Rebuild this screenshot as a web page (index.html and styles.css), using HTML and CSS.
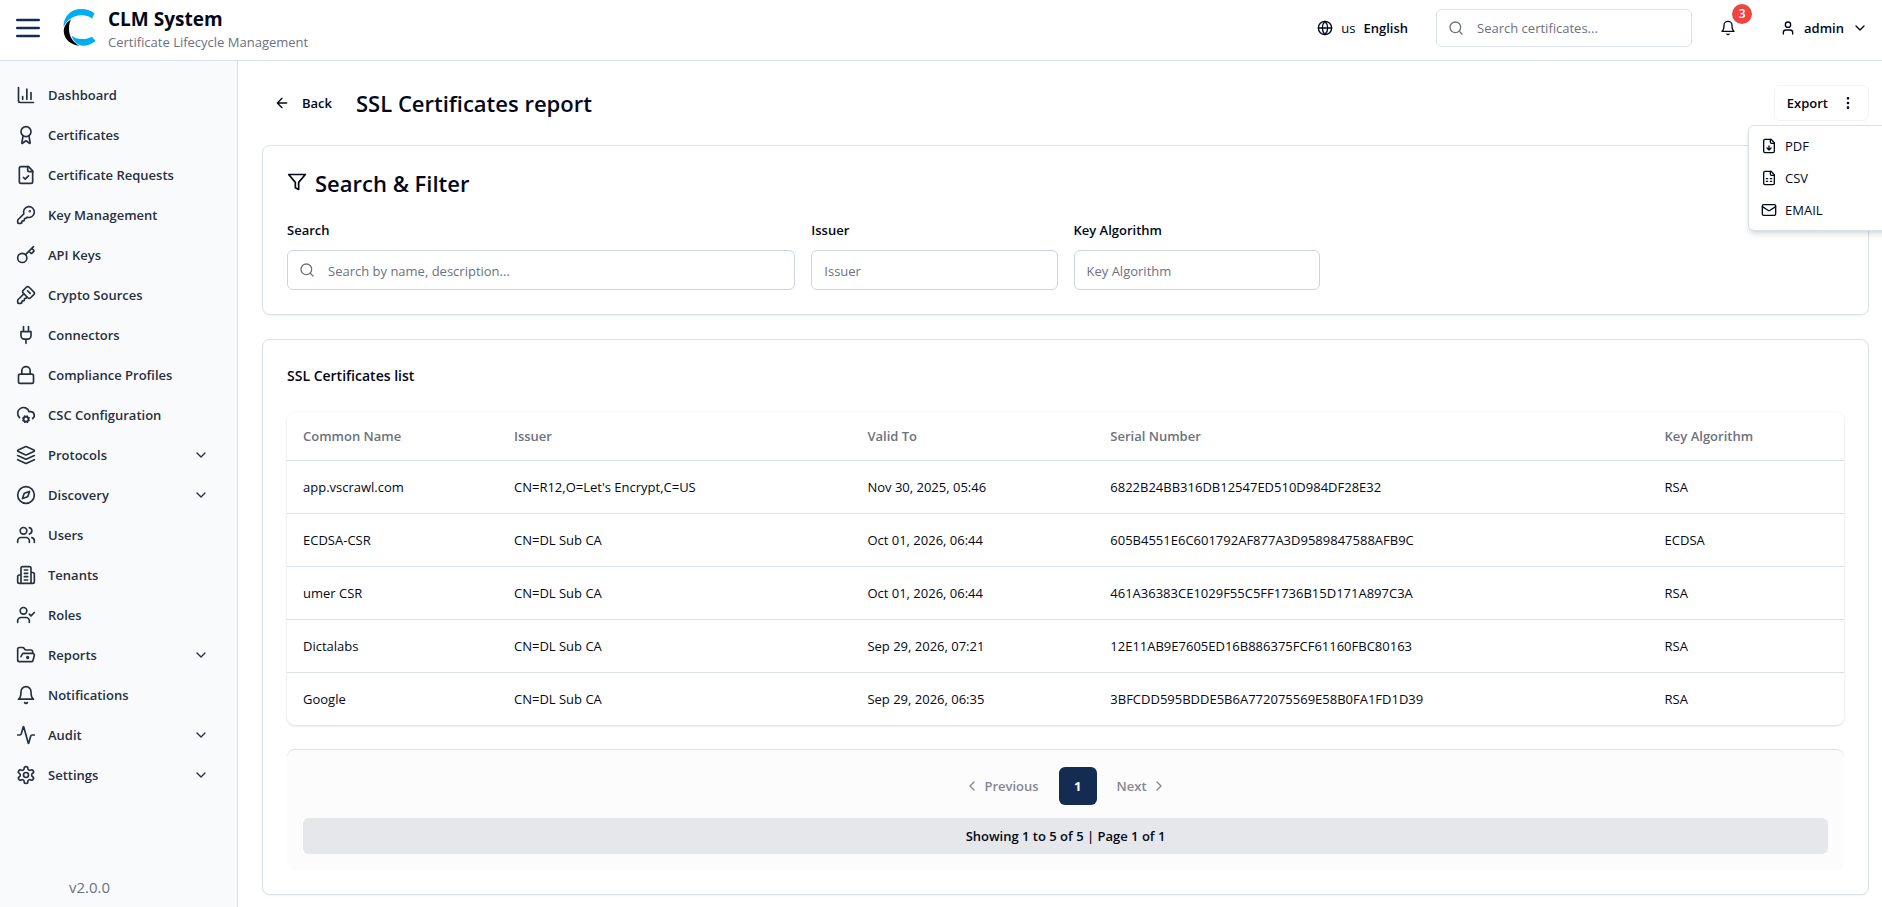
FILE: index.html
```html
<!DOCTYPE html>
<html lang="en">
<head>
<meta charset="utf-8">
<meta name="viewport" content="width=device-width, initial-scale=1">
<title>SSL Certificates report - CLM System</title>
<link rel="stylesheet" href="styles.css">
</head>
<body>
<svg class="sprite" aria-hidden="true">
  <symbol id="i-chart" viewBox="0 0 24 24"><path d="M3 3v16a2 2 0 0 0 2 2h16M18 17V9M13 17V5M8 17v-3"/></symbol>
  <symbol id="i-award" viewBox="0 0 24 24"><path d="m15.477 12.89 1.515 8.526a.5.5 0 0 1-.81.47l-3.58-2.687a1 1 0 0 0-1.197 0l-3.586 2.686a.5.5 0 0 1-.81-.469l1.514-8.526"/><circle cx="12" cy="8" r="6"/></symbol>
  <symbol id="i-file-check" viewBox="0 0 24 24"><path d="M15 2H6a2 2 0 0 0-2 2v16a2 2 0 0 0 2 2h12a2 2 0 0 0 2-2V7Z"/><path d="M14 2v4a2 2 0 0 0 2 2h4M9 15l2 2 4-4"/></symbol>
  <symbol id="i-key-round" viewBox="0 0 24 24"><path d="M2.586 17.414A2 2 0 0 0 2 18.828V21a1 1 0 0 0 1 1h3a1 1 0 0 0 1-1v-1a1 1 0 0 1 1-1h1a1 1 0 0 0 1-1v-1a1 1 0 0 1 1-1h.172a2 2 0 0 0 1.414-.586l.814-.814a6.5 6.5 0 1 0-4-4z"/><circle cx="16.5" cy="7.5" r=".5" fill="currentColor"/></symbol>
  <symbol id="i-key" viewBox="0 0 24 24"><path d="m15.5 7.5 2.3 2.3a1 1 0 0 0 1.4 0l2.1-2.1a1 1 0 0 0 0-1.4L19 4M21 2l-9.6 9.6"/><circle cx="7.5" cy="15.5" r="5.5"/></symbol>
  <symbol id="i-key-square" viewBox="0 0 24 24"><path d="M12.4 2.7a2.5 2.5 0 0 1 3.4 0l5.5 5.5a2.5 2.5 0 0 1 0 3.4l-3.7 3.7a2.5 2.5 0 0 1-3.4 0L8.7 9.8a2.5 2.5 0 0 1 0-3.4zM14 7l3 3"/><path d="m9.4 10.6-6.814 6.814A2 2 0 0 0 2 18.828V21a1 1 0 0 0 1 1h3a1 1 0 0 0 1-1v-1a1 1 0 0 1 1-1h1a1 1 0 0 0 1-1v-1a1 1 0 0 1 1-1h.172a2 2 0 0 0 1.414-.586l.814-.814"/></symbol>
  <symbol id="i-plug" viewBox="0 0 24 24"><path d="M12 22v-5M9 8V2M15 8V2M18 8v5a4 4 0 0 1-4 4h-4a4 4 0 0 1-4-4V8Z"/></symbol>
  <symbol id="i-lock" viewBox="0 0 24 24"><rect width="18" height="11" x="3" y="11" rx="2"/><path d="M7 11V7a5 5 0 0 1 10 0v4"/></symbol>
  <symbol id="i-cloud-cog" viewBox="0 0 24 24"><circle cx="12" cy="17" r="3"/><path d="M4.2 15.1A7 7 0 1 1 15.71 8h1.79a4.5 4.5 0 0 1 2.5 8.2M15.7 18.4l-.9-.3M9.2 15.9l-.9-.3M10.6 20.7l.3-.9M13.1 14.2l.3-.9M13.6 20.7l-.4-1M10.8 14.3l-.4-1M8.3 18.6l1-.4M14.7 15.8l1-.4"/></symbol>
  <symbol id="i-layers" viewBox="0 0 24 24"><path d="M12.83 2.18a2 2 0 0 0-1.66 0L2.6 6.08a1 1 0 0 0 0 1.83l8.58 3.91a2 2 0 0 0 1.66 0l8.58-3.9a1 1 0 0 0 0-1.83ZM22 17.65l-9.17 4.16a2 2 0 0 1-1.66 0L2 17.65M22 12.65l-9.17 4.16a2 2 0 0 1-1.66 0L2 12.65"/></symbol>
  <symbol id="i-compass" viewBox="0 0 24 24"><circle cx="12" cy="12" r="10"/><path d="m16.24 7.76-1.804 5.411a2 2 0 0 1-1.265 1.265L7.76 16.24l1.804-5.411a2 2 0 0 1 1.265-1.265z"/></symbol>
  <symbol id="i-users" viewBox="0 0 24 24"><path d="M16 21v-2a4 4 0 0 0-4-4H6a4 4 0 0 0-4 4v2M22 21v-2a4 4 0 0 0-3-3.87M16 3.13a4 4 0 0 1 0 7.75"/><circle cx="9" cy="7" r="4"/></symbol>
  <symbol id="i-building" viewBox="0 0 24 24"><path d="M6 22V4a2 2 0 0 1 2-2h8a2 2 0 0 1 2 2v18ZM6 12H4a2 2 0 0 0-2 2v6a2 2 0 0 0 2 2h2M18 9h2a2 2 0 0 1 2 2v9a2 2 0 0 1-2 2h-2M10 6h4M10 10h4M10 14h4M10 18h4"/></symbol>
  <symbol id="i-user-check" viewBox="0 0 24 24"><path d="m16 11 2 2 4-4M16 21v-2a4 4 0 0 0-4-4H6a4 4 0 0 0-4 4v2"/><circle cx="9" cy="7" r="4"/></symbol>
  <symbol id="i-folder" viewBox="0 0 24 24"><path d="m6 14 1.45-2.9A2 2 0 0 1 9.24 10H20a2 2 0 0 1 1.94 2.5l-1.55 6a2 2 0 0 1-1.94 1.5H4a2 2 0 0 1-2-2V5c0-1.1.9-2 2-2h3.93a2 2 0 0 1 1.66.9l.82 1.2a2 2 0 0 0 1.66.9H18a2 2 0 0 1 2 2v2"/><circle cx="14" cy="15" r="1"/></symbol>
  <symbol id="i-bell" viewBox="0 0 24 24"><path d="M6 8a6 6 0 0 1 12 0c0 7 3 9 3 9H3s3-2 3-9M10.3 21a1.94 1.94 0 0 0 3.4 0"/></symbol>
  <symbol id="i-activity" viewBox="0 0 24 24"><path d="M22 12h-2.48a2 2 0 0 0-1.93 1.46l-2.35 8.36a.25.25 0 0 1-.48 0L9.24 2.18a.25.25 0 0 0-.48 0l-2.35 8.36A2 2 0 0 1 4.49 12H2"/></symbol>
  <symbol id="i-settings" viewBox="0 0 24 24"><path d="M12.22 2h-.44a2 2 0 0 0-2 2v.18a2 2 0 0 1-1 1.73l-.43.25a2 2 0 0 1-2 0l-.15-.08a2 2 0 0 0-2.73.73l-.22.38a2 2 0 0 0 .73 2.73l.15.1a2 2 0 0 1 1 1.72v.51a2 2 0 0 1-1 1.74l-.15.09a2 2 0 0 0-.73 2.73l.22.38a2 2 0 0 0 2.73.73l.15-.08a2 2 0 0 1 2 0l.43.25a2 2 0 0 1 1 1.73V20a2 2 0 0 0 2 2h.44a2 2 0 0 0 2-2v-.18a2 2 0 0 1 1-1.73l.43-.25a2 2 0 0 1 2 0l.15.08a2 2 0 0 0 2.73-.73l.22-.39a2 2 0 0 0-.73-2.73l-.15-.08a2 2 0 0 1-1-1.74v-.5a2 2 0 0 1 1-1.74l.15-.09a2 2 0 0 0 .73-2.73l-.22-.38a2 2 0 0 0-2.73-.73l-.15.08a2 2 0 0 1-2 0l-.43-.25a2 2 0 0 1-1-1.73V4a2 2 0 0 0-2-2z"/><circle cx="12" cy="12" r="3"/></symbol>
  <symbol id="i-down" viewBox="0 0 24 24"><path d="m6 9 6 6 6-6"/></symbol>
  <symbol id="i-left" viewBox="0 0 24 24"><path d="m15 18-6-6 6-6"/></symbol>
  <symbol id="i-right" viewBox="0 0 24 24"><path d="m9 18 6-6-6-6"/></symbol>
  <symbol id="i-arrow-left" viewBox="0 0 24 24"><path d="m12 19-7-7 7-7M19 12H5"/></symbol>
  <symbol id="i-menu" viewBox="0 0 24 24"><path stroke-width="2.4" d="M1.200 4h21.600M1.200 12h21.600M1.200 20h21.600"/></symbol>
  <symbol id="i-globe" viewBox="0 0 24 24"><circle cx="12" cy="12" r="10"/><path d="M12 2a14.5 14.5 0 0 0 0 20 14.5 14.5 0 0 0 0-20M2 12h20"/></symbol>
  <symbol id="i-search" viewBox="0 0 24 24"><circle cx="11" cy="11" r="8"/><path d="m21 21-4.3-4.3"/></symbol>
  <symbol id="i-user" viewBox="0 0 24 24"><path d="M19 21v-2a4 4 0 0 0-4-4H9a4 4 0 0 0-4 4v2"/><circle cx="12" cy="7" r="4"/></symbol>
  <symbol id="i-dots" viewBox="0 0 24 24"><circle cx="12" cy="12" r="1"/><circle cx="12" cy="5" r="1"/><circle cx="12" cy="19" r="1"/></symbol>
  <symbol id="i-filter" viewBox="0 0 24 24"><path d="M22 3H2l8 9.46V19l4 2v-8.54L22 3z"/></symbol>
  <symbol id="i-file-down" viewBox="0 0 24 24"><path d="M15 2H6a2 2 0 0 0-2 2v16a2 2 0 0 0 2 2h12a2 2 0 0 0 2-2V7Z"/><path d="M14 2v4a2 2 0 0 0 2 2h4M12 18v-6M9 15l3 3 3-3"/></symbol>
  <symbol id="i-file-sheet" viewBox="0 0 24 24"><path d="M15 2H6a2 2 0 0 0-2 2v16a2 2 0 0 0 2 2h12a2 2 0 0 0 2-2V7Z"/><path d="M14 2v4a2 2 0 0 0 2 2h4M8 13h2M14 13h2M8 17h2M14 17h2"/></symbol>
  <symbol id="i-mail" viewBox="0 0 24 24"><rect width="20" height="16" x="2" y="4" rx="2"/><path d="m22 7-8.97 5.7a1.94 1.94 0 0 1-2.06 0L2 7"/></symbol>
</svg>

<header class="topbar">
  <button class="menu-toggle" type="button" aria-label="Toggle menu"><svg class="icon icon-24"><use href="#i-menu"/></svg></button>
  <svg class="logo" viewBox="0 0 33 38" aria-hidden="true">
    <path fill="#00aeef" d="M.5 19C.5 8 8 1 18 1c6 0 10.500 1.500 13.500 4.500L29 10.500C26 8 22 7 18 7.200 10 7.500 4 12 .5 19z"/>
    <path fill="#000" d="M8 11.500C3 14.500.5 19 .8 24c.7 7.500 7 13 15.700 13.700C9.500 34 6 28 6 21c0-4 .5-6.500 2-9.500z"/>
    <path fill="#00aeef" d="M8.500 27.500c4 4 14 5 20.500 1.300l3.500 4.200C28.500 36.500 24 38 19 37.700 14 36.500 10 33 8.500 27.500z"/>
  </svg>
  <div class="brand">
    <strong class="brand-name">CLM System</strong>
    <span class="brand-sub">Certificate Lifecycle Management</span>
  </div>
  <div class="topbar-tools">
    <button class="language" type="button"><svg class="icon"><use href="#i-globe"/></svg><span class="region">us</span><span>English</span></button>
    <label class="searchbox topbar-search"><svg class="icon"><use href="#i-search"/></svg><input type="text" aria-label="Search certificates" placeholder="Search certificates..."></label>
    <button class="bell" type="button" aria-label="Notifications"><svg class="icon"><use href="#i-bell"/></svg><span class="badge">3</span></button>
    <button class="account" type="button"><svg class="icon"><use href="#i-user"/></svg><span>admin</span><svg class="icon"><use href="#i-down"/></svg></button>
  </div>
</header>

<div class="shell">
  <aside class="sidebar">
    <nav class="nav">
      <a class="nav-item" href="#"><svg class="icon icon-20"><use href="#i-chart"/></svg><span>Dashboard</span></a>
      <a class="nav-item" href="#"><svg class="icon icon-20"><use href="#i-award"/></svg><span>Certificates</span></a>
      <a class="nav-item" href="#"><svg class="icon icon-20"><use href="#i-file-check"/></svg><span>Certificate Requests</span></a>
      <a class="nav-item" href="#"><svg class="icon icon-20"><use href="#i-key-round"/></svg><span>Key Management</span></a>
      <a class="nav-item" href="#"><svg class="icon icon-20"><use href="#i-key"/></svg><span>API Keys</span></a>
      <a class="nav-item" href="#"><svg class="icon icon-20"><use href="#i-key-square"/></svg><span>Crypto Sources</span></a>
      <a class="nav-item" href="#"><svg class="icon icon-20"><use href="#i-plug"/></svg><span>Connectors</span></a>
      <a class="nav-item" href="#"><svg class="icon icon-20"><use href="#i-lock"/></svg><span>Compliance Profiles</span></a>
      <a class="nav-item" href="#"><svg class="icon icon-20"><use href="#i-cloud-cog"/></svg><span>CSC Configuration</span></a>
      <button class="nav-item" type="button"><svg class="icon icon-20"><use href="#i-layers"/></svg><span>Protocols</span><svg class="icon chevron"><use href="#i-down"/></svg></button>
      <button class="nav-item" type="button"><svg class="icon icon-20"><use href="#i-compass"/></svg><span>Discovery</span><svg class="icon chevron"><use href="#i-down"/></svg></button>
      <a class="nav-item" href="#"><svg class="icon icon-20"><use href="#i-users"/></svg><span>Users</span></a>
      <a class="nav-item" href="#"><svg class="icon icon-20"><use href="#i-building"/></svg><span>Tenants</span></a>
      <a class="nav-item" href="#"><svg class="icon icon-20"><use href="#i-user-check"/></svg><span>Roles</span></a>
      <button class="nav-item" type="button"><svg class="icon icon-20"><use href="#i-folder"/></svg><span>Reports</span><svg class="icon chevron"><use href="#i-down"/></svg></button>
      <a class="nav-item" href="#"><svg class="icon icon-20"><use href="#i-bell"/></svg><span>Notifications</span></a>
      <button class="nav-item" type="button"><svg class="icon icon-20"><use href="#i-activity"/></svg><span>Audit</span><svg class="icon chevron"><use href="#i-down"/></svg></button>
      <button class="nav-item" type="button"><svg class="icon icon-20"><use href="#i-settings"/></svg><span>Settings</span><svg class="icon chevron"><use href="#i-down"/></svg></button>
    </nav>
    <div class="version">v2.0.0</div>
  </aside>

  <main class="main">
    <div class="page-head">
      <button class="back" type="button"><svg class="icon"><use href="#i-arrow-left"/></svg><span>Back</span></button>
      <h1 class="title">SSL Certificates report</h1>
      <div class="export">
        <button class="export-button" type="button" aria-expanded="true"><span>Export</span><svg class="icon"><use href="#i-dots"/></svg></button>
        <div class="export-menu">
          <button class="export-item" type="button"><svg class="icon"><use href="#i-file-down"/></svg><span>PDF</span></button>
          <button class="export-item" type="button"><svg class="icon"><use href="#i-file-sheet"/></svg><span>CSV</span></button>
          <button class="export-item" type="button"><svg class="icon"><use href="#i-mail"/></svg><span>EMAIL</span></button>
        </div>
      </div>
    </div>

    <section class="card">
      <h2 class="title filter-title"><svg class="icon icon-20"><use href="#i-filter"/></svg><span>Search &amp; Filter</span></h2>
      <form class="filters">
        <div class="field field-wide">
          <label for="f-search">Search</label>
          <div class="searchbox"><svg class="icon"><use href="#i-search"/></svg><input id="f-search" type="text" placeholder="Search by name, description..."></div>
        </div>
        <div class="field">
          <label for="f-issuer">Issuer</label>
          <input id="f-issuer" type="text" placeholder="Issuer">
        </div>
        <div class="field">
          <label for="f-algo">Key Algorithm</label>
          <input id="f-algo" type="text" placeholder="Key Algorithm">
        </div>
      </form>
    </section>

    <section class="card">
      <h2 class="list-title">SSL Certificates list</h2>
      <div class="table-wrap">
        <table class="table">
          <colgroup><col class="col-name"><col class="col-issuer"><col class="col-valid"><col class="col-serial"><col></colgroup>
          <thead><tr><th>Common Name</th><th>Issuer</th><th>Valid To</th><th>Serial Number</th><th>Key Algorithm</th></tr></thead>
          <tbody>
            <tr><td>app.vscrawl.com</td><td>CN=R12,O=Let's Encrypt,C=US</td><td>Nov 30, 2025, 05:46</td><td>6822B24BB316DB12547ED510D984DF28E32</td><td>RSA</td></tr>
            <tr><td>ECDSA-CSR</td><td>CN=DL Sub CA</td><td>Oct 01, 2026, 06:44</td><td>605B4551E6C601792AF877A3D9589847588AFB9C</td><td>ECDSA</td></tr>
            <tr><td>umer CSR</td><td>CN=DL Sub CA</td><td>Oct 01, 2026, 06:44</td><td>461A36383CE1029F55C5FF1736B15D171A897C3A</td><td>RSA</td></tr>
            <tr><td>Dictalabs</td><td>CN=DL Sub CA</td><td>Sep 29, 2026, 07:21</td><td>12E11AB9E7605ED16B886375FCF61160FBC80163</td><td>RSA</td></tr>
            <tr><td>Google</td><td>CN=DL Sub CA</td><td>Sep 29, 2026, 06:35</td><td>3BFCDD595BDDE5B6A772075569E58B0FA1FD1D39</td><td>RSA</td></tr>
          </tbody>
        </table>
      </div>
      <div class="pagination">
        <div class="pages">
          <button class="step" type="button" disabled><svg class="icon"><use href="#i-left"/></svg><span>Previous</span></button>
          <button class="page-current" type="button" aria-current="page">1</button>
          <button class="step" type="button" disabled><span>Next</span><svg class="icon"><use href="#i-right"/></svg></button>
        </div>
        <div class="summary">Showing 1 to 5 of 5 | Page 1 of 1</div>
      </div>
    </section>
  </main>
</div>
</body>
</html>
```
FILE: styles.css
```css
* { box-sizing: border-box; }

body {
  margin: 0;
  min-height: 100vh;
  display: flex;
  flex-direction: column;
  overflow-x: hidden;
  background: #fff;
  color: #020817;
  font: 13px/20px "Segoe UI", "Open Sans", "Noto Sans", sans-serif;
}

button, input { font: inherit; color: inherit; }
button { display: flex; align-items: center; border: 0; padding: 0; background: none; font-weight: 600; }
h1, h2 { margin: 0; }

.sprite { position: absolute; width: 0; height: 0; }
.icon { flex: none; width: 16px; height: 16px; fill: none; stroke: currentColor; stroke-width: 2; stroke-linecap: round; stroke-linejoin: round; }
.icon-20 { width: 20px; height: 20px; }
.icon-24 { width: 24px; height: 24px; }

/* Top bar */
.topbar { display: flex; align-items: center; min-height: 61px; padding: 0 14px 0 16px; border-bottom: 1px solid #dbe1e9; }
.menu-toggle { color: #152c52; padding-bottom: 4px; }
.logo { width: 33px; height: 38px; margin: 0 12px 6px 23px; flex: none; }
.brand { display: flex; flex-direction: column; padding-bottom: 2px; }
.brand-name { font-size: 19px; line-height: 26px; font-weight: 700; }
.brand-sub { color: #6b7280; }
.topbar-tools { display: flex; align-items: center; gap: 16px; margin-left: auto; padding-bottom: 4px; }
.language { gap: 8px; padding: 0 12px; }
.region { font-weight: 400; }
.topbar-search { width: 256px; }
.bell { position: relative; width: 40px; height: 40px; justify-content: center; }
.badge { position: absolute; top: -4px; right: -4px; width: 20px; height: 20px; border-radius: 10px; background: #ef4444; color: #fff; font-size: 12px; text-align: center; }
.account { gap: 8px; padding-left: 16px; }

/* Inputs */
input { width: 100%; height: 40px; padding: 2px 12px 0; border: 1px solid #cbd5e1; border-radius: 6px; background: #fff; outline: 0; }
input::placeholder { color: #6b7280; opacity: 1; }
.searchbox { display: grid; align-items: center; }
.searchbox > * { grid-area: 1 / 1; }
.searchbox .icon { z-index: 1; margin-left: 12px; color: #6b7280; }
.searchbox input { padding-left: 40px; }
.topbar-search input { height: 38px; padding-top: 0; border-color: #dbe1e9; }

/* Sidebar */
.shell { display: flex; flex: 1; }
.sidebar { display: flex; flex-direction: column; flex: none; width: 238px; padding-top: 14px; border-right: 1px solid #dbe1e9; background: #f8fafc; }
.nav { display: flex; flex-direction: column; }
.nav-item { display: flex; align-items: center; gap: 12px; height: 40px; padding: 0 28px 0 16px; color: #27303f; font-weight: 600; text-decoration: none; }
.chevron { margin-left: auto; }
.version { margin-top: auto; padding: 0 58px 8px 0; color: #6b7280; font-size: 15px; line-height: 24px; text-align: center; }

/* Page */
.main { flex: 1; min-width: 0; display: flex; flex-direction: column; gap: 24px; padding: 24px 13px 12px 24px; }
.page-head { display: flex; align-items: center; height: 36px; }
.back { gap: 12px; padding: 0 24px 0 12px; }
.title { font-size: 22px; line-height: 26px; font-weight: 600; }
.export { position: relative; margin-left: auto; }
.export-button { gap: 12px; height: 36px; padding: 0 12px; border: 1px solid #f1f3f6; border-radius: 6px; }
.export-menu { position: absolute; z-index: 2; top: 40px; right: -40px; width: 161px; padding: 4px; border: 1px solid #dbe1e9; border-radius: 6px; background: #fff; box-shadow: 0 4px 6px -1px rgba(0, 0, 0, .12), 0 2px 4px -2px rgba(0, 0, 0, .1); }
.export-item { width: 100%; gap: 8px; height: 32px; padding: 0 8px; font-weight: 400; }

.card { padding: 24px; border: 1px solid #dbe1e9; border-radius: 8px; background: #fff; box-shadow: 0 1px 2px rgba(0, 0, 0, .05); }
.filter-title { display: flex; align-items: center; gap: 8px; }
.filter-title .icon { margin-bottom: 2px; }
.filters { display: grid; grid-template-columns: repeat(6, 1fr); gap: 16px; margin-top: 24px; }
.field { display: flex; flex-direction: column; gap: 10px; }
.field-wide { grid-column: span 2; }
.field label { font-weight: 600; }

.list-title { font-size: 14px; line-height: 24px; font-weight: 600; }
.table-wrap { margin-top: 24px; border-radius: 8px; overflow: hidden; box-shadow: 0 1px 3px rgba(0, 0, 0, .12), 0 1px 2px -1px rgba(0, 0, 0, .1); }
.table { width: 100%; border-collapse: collapse; table-layout: fixed; }
.col-name { width: 13.55%; }
.col-issuer { width: 22.7%; }
.col-valid { width: 15.6%; }
.col-serial { width: 35.6%; }
.table th, .table td { padding: 0 16px; text-align: left; }
.table th { height: 48px; color: #6b7280; font-weight: 600; }
.table td { height: 53px; border-top: 1px solid #dbe1e9; }

.pagination { display: flex; flex-direction: column; gap: 12px; margin-top: 24px; padding: 16px; border-top: 1px solid #dbe1e9; border-radius: 8px; background: #fcfcfd; }
.pages { display: flex; align-items: center; justify-content: center; gap: 20px; height: 40px; }
.step { gap: 4px; color: #85888f; }
.page-current { width: 38px; height: 38px; justify-content: center; border-radius: 6px; background: #152c52; color: #fff; font-weight: 700; }
.summary { padding: 8px; border-radius: 6px; background: #e5e7eb; font-weight: 600; text-align: center; }
```
